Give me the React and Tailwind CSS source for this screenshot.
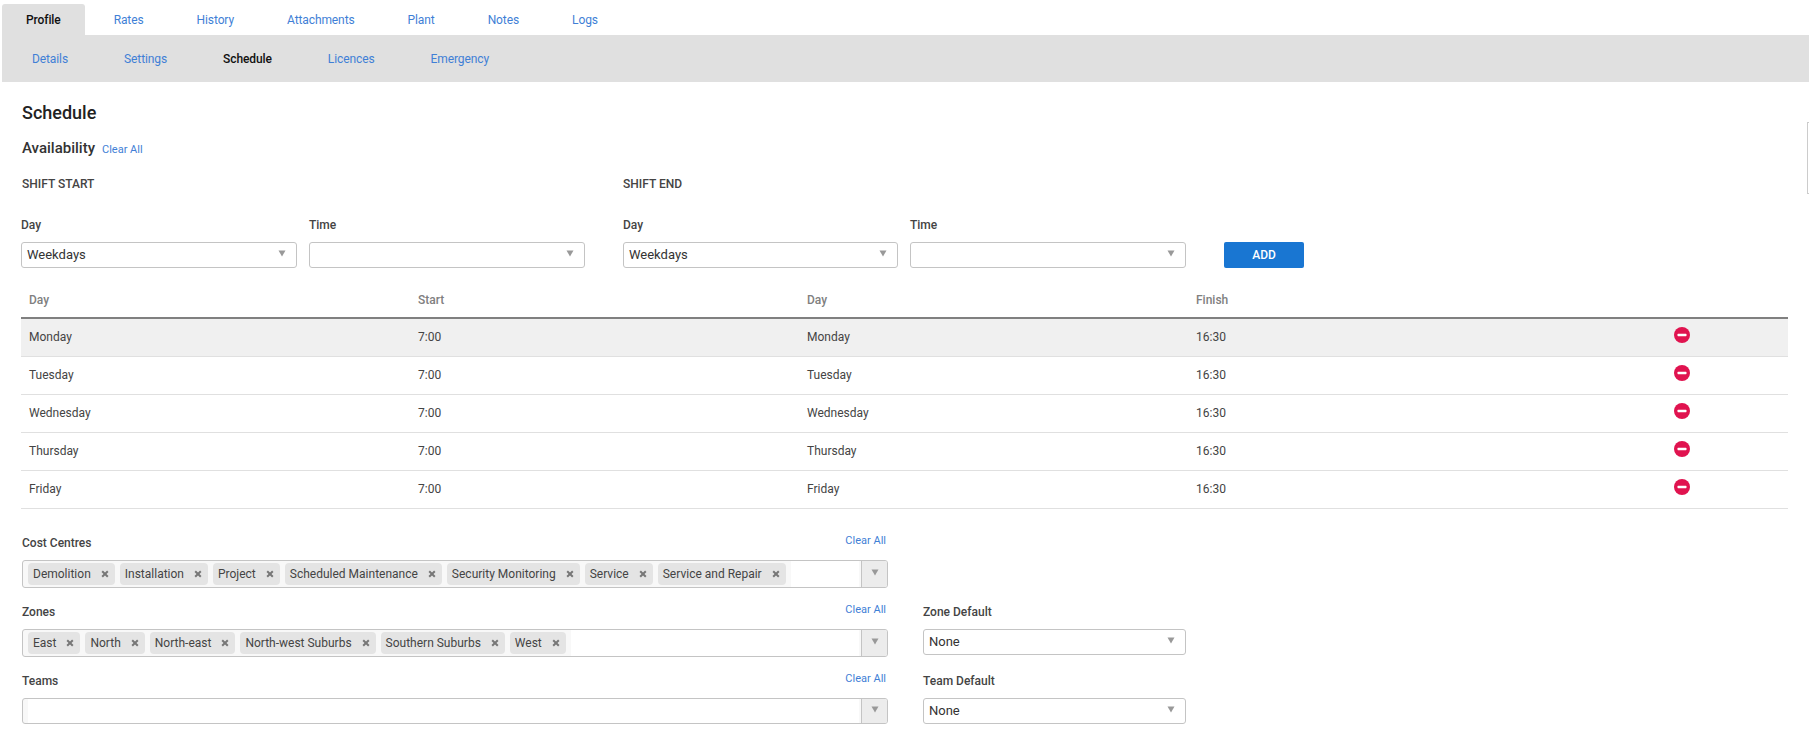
import React from 'react';

const TABS = ['Rates', 'History', 'Attachments', 'Plant', 'Notes', 'Logs'];
const SUB_TABS = ['Details', 'Settings', 'Schedule', 'Licences', 'Emergency'];
const DAYS = ['Monday', 'Tuesday', 'Wednesday', 'Thursday', 'Friday'];
const COST_CENTRES = ['Demolition', 'Installation', 'Project', 'Scheduled Maintenance', 'Security Monitoring', 'Service', 'Service and Repair'];
const ZONES = ['East', 'North', 'North-east', 'North-west Suburbs', 'Southern Suburbs', 'West'];

const Caret = () => (
  <svg width="8" height="7" viewBox="0 0 8 7" className="block shrink-0">
    <polygon points="0.5,0.5 7.5,0.5 4,6.5" fill="#999999" />
  </svg>
);

const RemoveIcon = () => (
  <svg width="16" height="16" viewBox="0 0 16 16" className="block">
    <circle cx="8" cy="8" r="8" fill="#e0134f" />
    <rect x="3.5" y="6.8" width="9" height="2.4" rx="0.6" fill="#ffffff" />
  </svg>
);

const Label = ({ children }) => (
  <div className="h-4 text-[12px] leading-4 font-medium text-[#444444]">{children}</div>
);

const Select = ({ value, width }) => (
  <div className={`flex h-[26px] items-center justify-between rounded-[3px] border border-[#c4c4c4] bg-white pl-[5px] pr-[10px] text-[13px] text-[#333333] ${width}`}>
    <span>{value}</span>
    <span className="-mt-[4px]"><Caret /></span>
  </div>
);

const Chip = ({ label }) => (
  <span className="flex h-[22px] items-center gap-[10px] rounded-[4px] bg-[#e4e4e4] pl-[5px] pr-[6px] text-[12px] text-[#444444]">
    {label}
    <svg width="8" height="8" viewBox="0 0 8 8" className="block">
      <path d="M1.2 1.2 L6.8 6.8 M6.8 1.2 L1.2 6.8" stroke="#777777" strokeWidth="2" />
    </svg>
  </span>
);

const MultiSelect = ({ items, height }) => (
  <div className={`flex overflow-hidden rounded-[3px] border border-[#c4c4c4] bg-[#f8f8f8] ${height}`}>
    <div className="flex flex-1 items-center gap-[5px] pl-[5px]">
      {items.map((item) => <Chip key={item} label={item} />)}
      <div className="mr-[2px] h-full flex-1 self-start bg-white" />
    </div>
    <div className="flex w-[26px] items-center justify-center border-l border-[#c4c4c4] bg-[#ececec] pb-[3px]">
      <Caret />
    </div>
  </div>
);

const ClearAll = () => <a className="text-[11px] leading-3 text-[#3f7fd6]">Clear All</a>;

const FieldRow = ({ label, items, height, defaultLabel }) => (
  <div className="ml-px mt-4 grid grid-cols-[866px_263px] gap-x-[35px] first:mt-[26px]">
    <div>
      <div className="flex justify-between pr-[2px]">
        <Label>{label}</Label>
        <ClearAll />
      </div>
      <div className="mt-[9px]"><MultiSelect items={items} height={height} /></div>
    </div>
    {defaultLabel && (
      <div>
        <Label>{defaultLabel}</Label>
        <div className="mt-[9px]"><Select value="None" /></div>
      </div>
    )}
  </div>
);

const App = () => {
  return (
    <div className="relative h-[744px] overflow-hidden bg-white pt-[4px] font-['Roboto',sans-serif]">
      {/* top tabs */}
      <div className="flex h-[31px] items-stretch pl-[2px] text-[12px] tracking-[-0.1px]">
        <a className="flex items-center rounded-t-[3px] bg-[#e0e0e0] px-6 font-medium text-[#111111]">Profile</a>
        {TABS.map((t) => (
          <a key={t} className="ml-[5px] flex items-center px-6 text-[#3f7fd6]">{t}</a>
        ))}
      </div>

      {/* sub tabs */}
      <div className="ml-[2px] flex h-[47px] items-stretch bg-[#e0e0e0] pl-[2px] text-[12px] tracking-[-0.1px]">
        {SUB_TABS.map((t) => (
          <a key={t} className={`flex items-center px-7 ${t === 'Schedule' ? 'font-medium text-[#111111]' : 'text-[#3f7fd6]'}`}>{t}</a>
        ))}
      </div>

      <div className="px-[21px]">
        <h1 className="mt-[19px] h-6 pl-px text-[18px] leading-6 font-medium text-[#222222]">Schedule</h1>

        <div className="mt-[13px] flex h-5 items-center gap-[7px] pl-px">
          <span className="text-[15px] font-medium text-[#333333]">Availability</span>
          <span className="mt-[3px] flex"><ClearAll /></span>
        </div>

        <div className="mt-[18px] flex h-4 text-[12px] leading-4 font-medium text-[#444444]">
          <div className="w-[602px] pl-px">SHIFT START</div>
          <div>SHIFT END</div>
        </div>

        <div className="mt-[25px] flex items-end">
          <div className="w-[288px]"><Label>Day</Label><div className="mt-[9px]"><Select value="Weekdays" width="w-[276px]" /></div></div>
          <div className="w-[314px]"><Label>Time</Label><div className="mt-[9px]"><Select value="" width="w-[276px]" /></div></div>
          <div className="w-[287px]"><Label>Day</Label><div className="mt-[9px]"><Select value="Weekdays" width="w-[275px]" /></div></div>
          <div className="w-[314px]"><Label>Time</Label><div className="mt-[9px]"><Select value="" width="w-[276px]" /></div></div>
          <button className="h-[26px] w-[80px] rounded-[2px] bg-[#1976d2] text-[12px] font-medium text-white">ADD</button>
        </div>

        {/* availability table */}
        <div className="mt-[13px] text-[12px]">
          <div className="grid h-[38px] grid-cols-[389px_389px_389px_389px_1fr] items-start border-b-2 border-[#808080] pt-[10px] font-medium text-[#808080]">
            <div className="pl-2">Day</div>
            <div className="pl-2">Start</div>
            <div className="pl-2">Day</div>
            <div className="pl-2">Finish</div>
            <div />
          </div>
          {DAYS.map((d, i) => (
            <div key={d} className={`grid h-[38px] grid-cols-[389px_389px_389px_389px_1fr] items-center border-b border-[#e0e0e0] pb-[2px] text-[#444444] ${i === 0 ? 'bg-[#f0f0f0]' : ''}`}>
              <div className="pl-2">{d}</div>
              <div className="pl-2">7:00</div>
              <div className="pl-2">{d}</div>
              <div className="pl-2">16:30</div>
              <div className="-mt-[4px] flex justify-center pr-[2px]"><RemoveIcon /></div>
            </div>
          ))}
        </div>

        <div>
          <FieldRow label="Cost Centres" items={COST_CENTRES} height="h-[28px]" />
          <FieldRow label="Zones" items={ZONES} height="h-[28px]" defaultLabel="Zone Default" />
          <FieldRow label="Teams" items={[]} height="h-[26px]" defaultLabel="Team Default" />
        </div>
      </div>

      {/* sliver of a panel at the right edge of the window */}
      <div className="absolute right-0 top-[122px] h-[72px] w-[2px] border-y border-l border-[#cccccc]" />
    </div>
  );
};

export default App;
